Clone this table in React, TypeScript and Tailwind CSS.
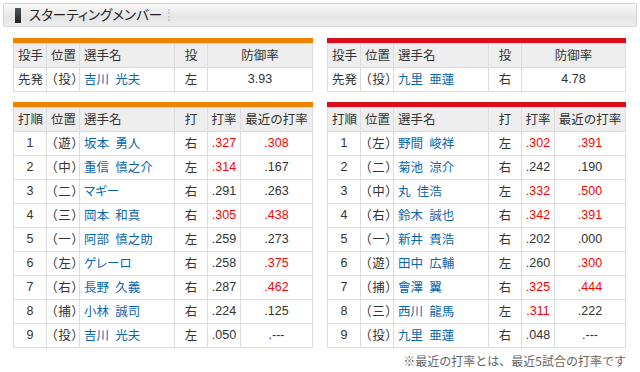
import React from "react";

type P = { no: string; pos: string; name: string; bat: string; avg: string; avgRed?: boolean; rec: string; recRed?: boolean };

const left: P[] = [
  { no: "1", pos: "（遊）", name: "坂本\u2002勇人", bat: "右", avg: ".327", avgRed: true, rec: ".308", recRed: true },
  { no: "2", pos: "（中）", name: "重信\u2002慎之介", bat: "左", avg: ".314", avgRed: true, rec: ".167" },
  { no: "3", pos: "（二）", name: "マギー", bat: "右", avg: ".291", rec: ".263" },
  { no: "4", pos: "（三）", name: "岡本\u2002和真", bat: "右", avg: ".305", avgRed: true, rec: ".438", recRed: true },
  { no: "5", pos: "（一）", name: "阿部\u2002慎之助", bat: "左", avg: ".259", rec: ".273" },
  { no: "6", pos: "（左）", name: "ゲレーロ", bat: "右", avg: ".258", rec: ".375", recRed: true },
  { no: "7", pos: "（右）", name: "長野\u2002久義", bat: "右", avg: ".287", rec: ".462", recRed: true },
  { no: "8", pos: "（捕）", name: "小林\u2002誠司", bat: "右", avg: ".224", rec: ".125" },
  { no: "9", pos: "（投）", name: "吉川\u2002光夫", bat: "左", avg: ".050", rec: ".---" },
];

const right: P[] = [
  { no: "1", pos: "（左）", name: "野間\u2002峻祥", bat: "左", avg: ".302", avgRed: true, rec: ".391", recRed: true },
  { no: "2", pos: "（二）", name: "菊池\u2002涼介", bat: "右", avg: ".242", rec: ".190" },
  { no: "3", pos: "（中）", name: "丸\u2002佳浩", bat: "左", avg: ".332", avgRed: true, rec: ".500", recRed: true },
  { no: "4", pos: "（右）", name: "鈴木\u2002誠也", bat: "右", avg: ".342", avgRed: true, rec: ".391", recRed: true },
  { no: "5", pos: "（一）", name: "新井\u2002貴浩", bat: "右", avg: ".202", rec: ".000" },
  { no: "6", pos: "（遊）", name: "田中\u2002広輔", bat: "左", avg: ".260", rec: ".300", recRed: true },
  { no: "7", pos: "（捕）", name: "會澤\u2002翼", bat: "右", avg: ".325", avgRed: true, rec: ".444", recRed: true },
  { no: "8", pos: "（三）", name: "西川\u2002龍馬", bat: "左", avg: ".311", avgRed: true, rec: ".222" },
  { no: "9", pos: "（投）", name: "九里\u2002亜蓮", bat: "右", avg: ".048", rec: ".---" },
];

const th = "border border-[#dddddd] bg-[#eeeeee] font-normal h-[24px] p-0";
const td = "border border-[#dddddd] bg-white h-[24px] p-0";
const num = "font-['Liberation_Sans',sans-serif] text-[12.5px]";
const palt = "[font-feature-settings:'palt']";
const posCls = `pl-[4px] ${palt} tracking-[1px] whitespace-nowrap`;
const nameCls = `pl-[4px] ${palt} text-[#0a66b0] whitespace-nowrap`;

function PitcherTable({ bar, name, hand, era }: { bar: string; name: string; hand: string; era: string }) {
  return (
    <div className="w-full">
      <div className={`h-[5px] ${bar}`} />
      <table className="w-full table-fixed border-collapse">
        <colgroup>
          <col className="w-[33px]" />
          <col className="w-[33px]" />
          <col className="w-[95px]" />
          <col className="w-[33px]" />
          <col />
        </colgroup>
        <thead>
          <tr>
            <th className={`${th} text-left pl-[4px]`}>投手</th>
            <th className={`${th} text-left pl-[4px]`}>位置</th>
            <th className={`${th} text-left pl-[4px]`}>選手名</th>
            <th className={`${th} text-center`}>投</th>
            <th className={`${th} text-center`}>防御率</th>
          </tr>
        </thead>
        <tbody>
          <tr>
            <td className={`${td} pl-[4px]`}>先発</td>
            <td className={`${td} ${posCls}`}>（投）</td>
            <td className={`${td} ${nameCls}`}>{name}</td>
            <td className={`${td} text-center`}>{hand}</td>
            <td className={`${td} text-center ${num}`}>{era}</td>
          </tr>
        </tbody>
      </table>
    </div>
  );
}

function LineupTable({ bar, rows }: { bar: string; rows: P[] }) {
  return (
    <div className="w-full">
      <div className={`h-[5px] ${bar}`} />
      <table className="w-full table-fixed border-collapse">
        <colgroup>
          <col className="w-[33px]" />
          <col className="w-[33px]" />
          <col className="w-[95px]" />
          <col className="w-[33px]" />
          <col className="w-[33px]" />
          <col />
        </colgroup>
        <thead>
          <tr>
            <th className={`${th} text-left pl-[4px]`}>打順</th>
            <th className={`${th} text-left pl-[4px]`}>位置</th>
            <th className={`${th} text-left pl-[4px]`}>選手名</th>
            <th className={`${th} text-center`}>打</th>
            <th className={`${th} text-center`}>打率</th>
            <th className={`${th} text-center whitespace-nowrap`}>最近の打率</th>
          </tr>
        </thead>
        <tbody>
          {rows.map((r) => (
            <tr key={r.no}>
              <td className={`${td} text-center ${num}`}>{r.no}</td>
              <td className={`${td} ${posCls}`}>{r.pos}</td>
              <td className={`${td} ${nameCls}`}>{r.name}</td>
              <td className={`${td} text-center`}>{r.bat}</td>
              <td className={`${td} text-center ${num} ${r.avgRed ? "text-[#ff0000]" : ""}`}>{r.avg}</td>
              <td className={`${td} text-center ${num} ${r.recRed ? "text-[#ff0000]" : ""}`}>{r.rec}</td>
            </tr>
          ))}
        </tbody>
      </table>
    </div>
  );
}

export default function App() {
  return (
    <div className="w-[640px] h-[372px] bg-white text-[#333333] text-[12.5px] leading-none font-['Noto_Sans_CJK_JP',sans-serif] pt-[3px] px-[3px]">
      <div className="h-[24px] border border-[#d6d6d6] rounded-[2px] bg-[linear-gradient(to_bottom,#f8f8f8,#e5e5e5_60%,#eeeeee)] flex items-center pl-[11px]">
        <div className="w-[6px] h-[15px] bg-[linear-gradient(to_bottom,#555555,#222222)]" />
        <div className="ml-[8px] text-[13.5px] text-[#222222] [font-feature-settings:'palt']">スターティングメンバー</div>
        <div className="ml-[6px] h-[12px] border-l-2 border-dotted border-[#cccccc]" />
      </div>
      <div className="px-[10px]">
        <div className="mt-[11px] flex gap-[14px]">
          <div className="w-[300px]">
            <PitcherTable bar="bg-[#ef8200]" name={"吉川\u2002光夫"} hand="左" era="3.93" />
          </div>
          <div className="w-[299px]">
            <PitcherTable bar="bg-[#d50f1e]" name={"九里\u2002亜蓮"} hand="右" era="4.78" />
          </div>
        </div>
        <div className="mt-[10px] flex gap-[14px]">
          <div className="w-[300px]">
            <LineupTable bar="bg-[#ef8200]" rows={left} />
          </div>
          <div className="w-[299px]">
            <LineupTable bar="bg-[#d50f1e]" rows={right} />
          </div>
        </div>
        <div className="mt-[7px] w-[613px] text-right text-[12px] text-[#666666]">※最近の打率とは、最近5試合の打率です</div>
      </div>
    </div>
  );
}
